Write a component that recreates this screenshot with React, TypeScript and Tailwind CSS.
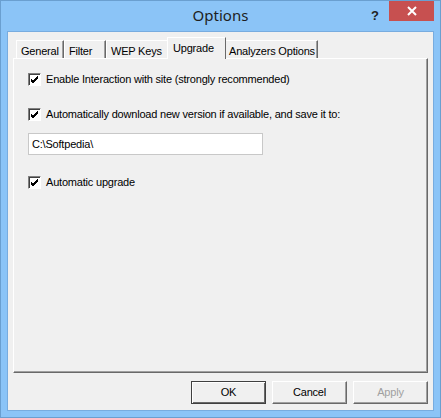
import React from 'react';

const ui = "font-['Liberation_Sans',Arial,sans-serif] text-[11px] tracking-[-0.2px] text-black";

function CheckBox({ label }: { label: string }) {
  return (
    <label className="flex items-center gap-[5px] h-[13px] whitespace-nowrap">
      <span className="w-[13px] h-[13px] shrink-0 border-t border-l border-t-[#808080] border-l-[#808080] border-b border-r border-b-white border-r-white bg-white shadow-[inset_1px_1px_0_#404040] flex items-center justify-center">
        <svg width="9" height="9" viewBox="0 0 9 9">
          <path d="M1 4 L3 6 L8 1 M1 5 L3 7 L8 2 M1 6 L3 8 L8 3" stroke="#000" strokeWidth="1" fill="none" shapeRendering="crispEdges" />
        </svg>
      </span>
      <span>{label}</span>
    </label>
  );
}

function Tab({ label, w, active }: { label: string; w: string; active?: boolean }) {
  if (active) {
    return (
      <div className={`${w} h-[22px] -mx-[2px] -mb-[1px] z-10 bg-[#f0f0f0] border-t border-l border-t-white border-l-white border-r border-r-[#696969] pl-[5px] pt-[2px] relative whitespace-nowrap`}>
        {label}
      </div>
    );
  }
  return (
    <div className={`${w} h-[18px] bg-[#f0f0f0] border-t border-l border-t-white border-l-white border-r border-r-[#696969] shadow-[inset_-1px_0_0_#a0a0a0] pl-[4px] pt-[2px] whitespace-nowrap overflow-hidden`}>
      {label}
    </div>
  );
}

function Button({ label, primary, disabled }: { label: string; primary?: boolean; disabled?: boolean }) {
  return (
    <button
      className={`w-[75px] h-[23px] bg-[#f0f0f0] ${
        primary
          ? 'border border-[#404040] shadow-[inset_1px_1px_0_#fff,inset_-1px_-1px_0_#696969]'
          : 'border-t border-l border-t-white border-l-white border-r border-b border-r-[#696969] border-b-[#696969] shadow-[inset_-1px_-1px_0_#a0a0a0]'
      } ${disabled ? 'text-[#a0a0a0]' : 'text-black'}`}
    >
      {label}
    </button>
  );
}

export default function App() {
  return (
    <div className="w-[441px] h-[418px] bg-[#8bc4f7] border border-[#6a9fd0] flex flex-col">
      <div className="h-[30px] grid grid-cols-[1fr_auto_1fr]">
        <div />
        <div className="font-['Noto_Sans',sans-serif] text-[15px] text-[#1e1e1e] pt-[3px]">Options</div>
        <div className="flex justify-end items-start pr-[6px]">
          <span className="font-['Liberation_Sans',sans-serif] font-bold text-[13px] text-[#222] mt-[5px] mr-[10px]">?</span>
          <div className="w-[45px] h-[20px] bg-[#c75050] flex items-center justify-center">
            <svg width="10" height="10" viewBox="0 0 10 10">
              <path d="M1 1 L9 9 M9 1 L1 9" stroke="#fff" strokeWidth="2" />
            </svg>
          </div>
        </div>
      </div>
      <div className={`flex-1 mx-[6px] mb-[6px] bg-[#f0f0f0] border border-[#78acdf] flex flex-col px-[5px] pt-[5px] pb-[6px] ${ui}`}>
        <div className="flex items-end pl-[3px] h-[21px]">
          <Tab label="General" w="w-[48px]" />
          <Tab label="Filter" w="w-[42px]" />
          <Tab label="WEP Keys" w="w-[63px]" />
          <Tab label="Upgrade" w="w-[59px]" active />
          <Tab label="Analyzers Options" w="w-[94px]" />
        </div>
        <div className="h-[315px] border-t border-l border-t-white border-l-white border-r border-b border-r-[#696969] border-b-[#696969] shadow-[inset_-1px_-1px_0_#a0a0a0] pl-[14px] pt-[14px] flex flex-col">
          <CheckBox label="Enable Interaction with site (strongly recommended)" />
          <div className="h-[22px]" />
          <CheckBox label="Automatically download new version if available, and save it to:" />
          <div className="mt-[12px] w-[235px] h-[22px] bg-white border border-[#c8c8c8] pl-[3px] flex items-center">
            C:\Softpedia\
          </div>
          <div className="h-[21px]" />
          <CheckBox label="Automatic upgrade" />
        </div>
        <div className="flex-1 flex justify-end items-end gap-[6px]">
          <Button label="OK" primary />
          <Button label="Cancel" />
          <Button label="Apply" disabled />
        </div>
      </div>
    </div>
  );
}
